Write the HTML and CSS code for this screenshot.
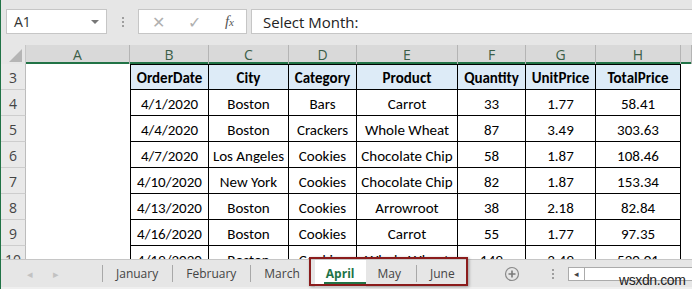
FILE: index.html
```html
<!DOCTYPE html>
<html lang="en">
<head>
    <meta charset="UTF-8">
    <title>Sheet - April</title>
    <link rel="stylesheet" href="styles.css">
</head>
<body>
    <div class="app">
        <div class="formula-bar">
            <div class="name-box">
                <span>A1</span>
                <span class="caret"></span>
            </div>
            <div class="grip"><i></i><i></i><i></i></div>
            <div class="fx-box">
                <span class="fx-cancel">&#x2715;</span>
                <span class="fx-enter">&#x2713;</span>
                <span class="fx-label">f<small>x</small></span>
            </div>
            <div class="formula-input">Select Month:</div>
        </div>

        <div class="sheet">
            <div class="row col-head">
                <div class="corner"><span class="corner-tri"></span></div>
                <div>A</div><div>B</div><div>C</div><div>D</div><div>E</div><div>F</div><div>G</div><div>H</div><div></div>
            </div>
            <div id="rows"></div>
        </div>

        <div class="tabbar">
            <div class="tab-nav">
                <span class="nav-arrow">&#x25C2;</span>
                <span class="nav-arrow">&#x25B8;</span>
            </div>
            <span class="tab-sep"></span>
            <span class="tab">January</span>
            <span class="tab-sep"></span>
            <span class="tab">February</span>
            <span class="tab-sep"></span>
            <span class="tab">March</span>
            <span class="tab active">April</span>
            <span class="tab tab-next">May</span>
            <span class="tab-sep"></span>
            <span class="tab">June</span>
            <span class="add-sheet">
                <svg width="16" height="16" viewBox="0 0 16 16">
                    <circle cx="8" cy="8" r="6.5" fill="none" stroke="#8a8a8a" stroke-width="1.2"/>
                    <path d="M8 4.5v7M4.5 8h7" stroke="#7a7a7a" stroke-width="1.6"/>
                </svg>
            </span>
            <div class="grip tab-grip"><i></i><i></i><i></i></div>
            <div class="hscroll">
                <span class="hscroll-btn">&#x25C2;</span>
            </div>
        </div>

        <div class="highlight"></div>
        <div class="watermark">wsxdn.com</div>
    </div>

    <script>
        const data = [
            ['OrderDate', 'City', 'Category', 'Product', 'Quantity', 'UnitPrice', 'TotalPrice'],
            ['4/1/2020', 'Boston', 'Bars', 'Carrot', '33', '1.77', '58.41'],
            ['4/4/2020', 'Boston', 'Crackers', 'Whole Wheat', '87', '3.49', '303.63'],
            ['4/7/2020', 'Los Angeles', 'Cookies', 'Chocolate Chip', '58', '1.87', '108.46'],
            ['4/10/2020', 'New York', 'Cookies', 'Chocolate Chip', '82', '1.87', '153.34'],
            ['4/13/2020', 'Boston', 'Cookies', 'Arrowroot', '38', '2.18', '82.84'],
            ['4/16/2020', 'Boston', 'Cookies', 'Carrot', '55', '1.77', '97.35'],
            ['4/19/2020', 'Boston', 'Cookies', 'Whole Wheat', '149', '3.49', '520.01']
        ];

        const rows = document.getElementById('rows');
        data.forEach(function(values, i) {
            const row = document.createElement('div');
            row.className = 'row' + (i === 0 ? ' head-row' : '');

            const num = document.createElement('div');
            num.className = 'row-num';
            num.textContent = i + 3;
            row.appendChild(num);

            const blank = document.createElement('div');
            blank.className = 'blank';
            row.appendChild(blank);

            values.forEach(function(v, j) {
                const cell = document.createElement('div');
                cell.className = 'cell' + (j === 0 ? ' first' : '');
                cell.textContent = v;
                row.appendChild(cell);
            });

            row.appendChild(document.createElement('div'));
            rows.appendChild(row);
        });
    </script>
</body>
</html>
```

FILE: styles.css
```css
body {
    margin: 0;
    font-family: "Open Sans", "Noto Sans", sans-serif;
    overflow: hidden;
}
.app {
    position: relative;
    width: 691px;
    height: 289px;
    border-left: 1px solid #217346;
    background-color: #e6e6e6;
    overflow: hidden;
}

/* formula bar */
.formula-bar {
    height: 45px;
    display: flex;
    align-items: flex-start;
    padding-top: 9px;
    padding-left: 5px;
    box-sizing: border-box;
}
.name-box,
.fx-box,
.formula-input {
    height: 25px;
    box-sizing: border-box;
    background-color: white;
    border: 1px solid #c6c6c6;
    display: flex;
    align-items: center;
    font-size: 14px;
    color: #333;
}
.name-box {
    width: 101px;
    padding: 0 7px;
    justify-content: space-between;
}
.caret {
    width: 0;
    height: 0;
    border-left: 4px solid transparent;
    border-right: 4px solid transparent;
    border-top: 4px solid #777;
}
.grip {
    width: 31px;
    height: 25px;
    display: flex;
    flex-direction: column;
    align-items: center;
    justify-content: center;
    gap: 2px;
}
.grip i {
    width: 2px;
    height: 2px;
    background-color: #9e9e9e;
}
.fx-box {
    width: 109px;
    padding: 0 12px 0 13px;
    justify-content: space-between;
}
.fx-cancel,
.fx-enter {
    color: #b0b0b0;
    font-size: 16px;
}
.fx-label {
    font-family: "Liberation Serif", serif;
    font-style: italic;
    font-size: 15px;
    color: #555;
}
.fx-label small {
    font-size: 11px;
}
.formula-input {
    flex: 1;
    margin-left: 4px;
    margin-right: -2px;
    padding-left: 11px;
    font-size: 15px;
    color: #222;
}

/* grid */
.sheet {
    height: 214px;
    overflow: hidden;
    background-color: white;
}
.row {
    display: grid;
    grid-template-columns: 25px 104px 79px 80px 68px 101px 68px 70px 85px 1fr;
    height: 26px;
}
.col-head {
    height: 17px;
    background-color: #d9d9d9;
    border-bottom: 2px solid #217346;
    font-size: 14px;
    color: #3b5e48;
}
.col-head div {
    display: flex;
    align-items: center;
    justify-content: center;
    border-right: 1px solid #b4b4b4;
}
.col-head .corner {
    background-color: #e6e6e6;
    position: relative;
    border-right: 1px solid #c6c6c6;
}
.corner-tri {
    position: absolute;
    right: 3px;
    bottom: 2px;
    width: 0;
    height: 0;
    border-left: 13px solid transparent;
    border-bottom: 13px solid #b5b5b5;
}
.row-num {
    background-color: #e9e9e9;
    border-right: 1px solid #bcbcbc;
    border-bottom: 1px solid #cdcdcd;
    font-size: 14px;
    color: #444;
    display: flex;
    align-items: flex-end;
    justify-content: center;
    padding-bottom: 2px;
    box-sizing: border-box;
}
.cell {
    font-family: Carlito, Lato, sans-serif;
    font-size: 15px;
    color: #000;
    border-right: 1px solid #000;
    border-bottom: 1px solid #000;
    display: flex;
    align-items: center;
    justify-content: center;
    padding-top: 2px;
    box-sizing: border-box;
    white-space: nowrap;
    overflow: hidden;
}
.cell.first {
    border-left: 1px solid #000;
}
.head-row .cell {
    background-color: #ddebf7;
    border-top: 1px solid #000;
    font-weight: bold;
}

/* sheet tabs */
.tabbar {
    height: 30px;
    box-sizing: border-box;
    border-top: 1px solid #c6c6c6;
    border-bottom: 2px solid #efefef;
    display: flex;
    align-items: center;
    font-size: 12px;
    color: #444;
}
.tab-nav {
    width: 101px;
    display: flex;
    padding-left: 26px;
    gap: 20px;
    box-sizing: border-box;
}
.nav-arrow {
    color: #c2c2c2;
    font-size: 11px;
}
.tab-sep {
    width: 1px;
    height: 17px;
    background-color: #a8a8a8;
}
.tab {
    padding: 0 14px 0 13px;
    height: 27px;
    display: flex;
    align-items: center;
}
.tab.active {
    position: relative;
    background-color: white;
    color: #217346;
    font-weight: bold;
    padding: 0 12px 0 11px;
    margin-left: 1px;
}
.tab.active::after {
    content: "";
    position: absolute;
    left: 9px;
    right: 0;
    bottom: 3px;
    height: 2px;
    background-color: #217346;
}
.tab.tab-next {
    padding: 0 15px 0 11px;
}
.add-sheet {
    margin-left: 35px;
    display: flex;
}
.tab-grip {
    width: 16px;
    margin-left: 25px;
}
.hscroll {
    flex: 1;
    height: 14px;
    margin-left: 7px;
    margin-right: -2px;
    background-color: white;
    border: 1px solid #ababab;
    box-sizing: border-box;
    display: flex;
}
.hscroll-btn {
    width: 15px;
    border-right: 1px solid #ababab;
    font-size: 9px;
    color: #444;
    display: flex;
    align-items: center;
    justify-content: center;
}

/* overlays */
.highlight {
    position: absolute;
    left: 308px;
    top: 257px;
    width: 159px;
    height: 29px;
    box-sizing: border-box;
    border: 2px solid #8b1c1c;
    box-shadow: 1px 1px 3px rgba(0, 0, 0, 0.35);
}
.watermark {
    position: absolute;
    left: 618px;
    top: 272px;
    font-family: "Liberation Sans", Arial, sans-serif;
    font-size: 14px;
    letter-spacing: -0.4px;
    color: #222;
}
```
